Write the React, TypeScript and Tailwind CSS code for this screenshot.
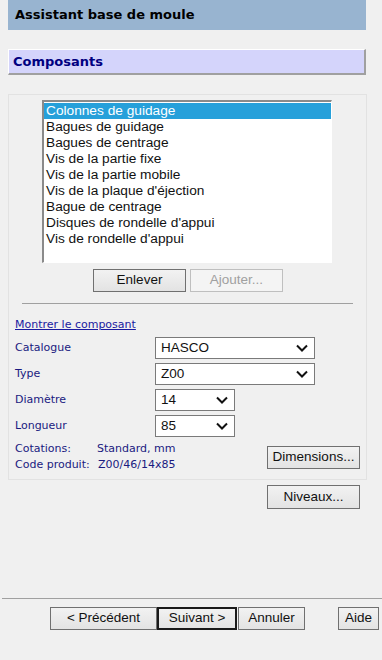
import React from 'react'

const components = [
  'Colonnes de guidage',
  'Bagues de guidage',
  'Bagues de centrage',
  'Vis de la partie fixe',
  'Vis de la partie mobile',
  "Vis de la plaque d'éjection",
  'Bague de centrage',
  "Disques de rondelle d'appui",
  "Vis de rondelle d'appui",
]

const winFont = { fontFamily: '"Liberation Sans", Arial, sans-serif' }
const verdana = { fontFamily: '"DejaVu Sans", Verdana, sans-serif' }

function Chevron() {
  return (
    <svg width="12" height="8" viewBox="0 0 12 8" className="shrink-0">
      <polyline points="1,1.5 6,6.5 11,1.5" fill="none" stroke="#111" strokeWidth="2" />
    </svg>
  )
}

function Select({ value, width }: { value: string; width: string }) {
  return (
    <div
      className={`flex h-[22px] items-center justify-between border border-[#7a7a7a] bg-white pl-[5px] pr-[6px] text-[13.5px] text-[#111] ${width}`}
      style={winFont}
    >
      <span>{value}</span>
      <Chevron />
    </div>
  )
}

function WinButton({
  children,
  className = '',
  disabled = false,
  isDefault = false,
}: {
  children: React.ReactNode
  className?: string
  disabled?: boolean
  isDefault?: boolean
}) {
  const border = disabled
    ? 'border border-[#bfbfbf] text-[#a0a0a0] bg-[#f4f4f4]'
    : isDefault
      ? 'border-2 border-[#1a1a1a] text-[#111] bg-gradient-to-b from-[#f2f2f2] to-[#e3e3e3]'
      : 'border border-[#707070] text-[#111] bg-gradient-to-b from-[#f2f2f2] to-[#e3e3e3]'
  return (
    <button
      className={`flex h-[23px] items-center justify-center text-[13.5px] ${border} ${className}`}
      style={winFont}
    >
      {children}
    </button>
  )
}

function Row({ label, children }: { label: string; children: React.ReactNode }) {
  return (
    <div className="flex h-[22px] items-center">
      <span className="w-[146px] pl-[6px] text-[11px] text-[#1a1a80]">{label}</span>
      {children}
    </div>
  )
}

export default function App() {
  return (
    <div className="relative h-[660px] w-[382px] overflow-hidden bg-[#f0f0f0]" style={verdana}>
      <div className="ml-2 flex h-[30px] w-[358px] items-center bg-[#98b4d0] pl-[7px] text-[13px] font-bold text-black">
        Assistant base de moule
      </div>

      <div className="ml-2 mt-[19px] flex h-[26px] w-[358px] items-center border-l border-t border-b-2 border-r-2 border-l-white border-t-white border-b-[#a0a0a0] border-r-[#a0a0a0] bg-[#d4d4fb] pl-[4px] text-[13px] font-bold text-[#000080]">
        Composants
      </div>

      <div className="ml-2 mt-[19px] h-[386px] w-[359px] border border-[#e2e2e2]">
        <div
          className="ml-[33px] mt-[5px] h-[163px] w-[290px] border-l-2 border-t-2 border-l-[#8a8a8a] border-t-[#8a8a8a] border-r border-b border-r-white border-b-white bg-white pt-px text-[13.7px] text-[#111]"
          style={winFont}
        >
          {components.map((c, i) => (
            <div
              key={c}
              className={`h-[16px] pl-[2px] leading-[16px] ${i === 0 ? 'bg-[#26a0da] text-white' : ''}`}
            >
              {c}
            </div>
          ))}
        </div>

        <div className="ml-[84px] mt-[6px] flex gap-[4px]">
          <WinButton className="w-[93px]">Enlever</WinButton>
          <WinButton className="w-[93px]" disabled>
            Ajouter...
          </WinButton>
        </div>

        <div className="ml-[13px] mt-[11px] h-px w-[331px] bg-[#a0a0a0]" />

        <div className="mt-[14px] pl-[6px] text-[11px] leading-[14px] text-[#1a1aa0] underline">
          Montrer le composant
        </div>

        <div className="mt-[5px] flex flex-col gap-[4px]">
          <Row label="Catalogue">
            <Select value="HASCO" width="w-[160px]" />
          </Row>
          <Row label="Type">
            <Select value="Z00" width="w-[160px]" />
          </Row>
          <Row label="Diamètre">
            <Select value="14" width="w-[80px]" />
          </Row>
          <Row label="Longueur">
            <Select value="85" width="w-[80px]" />
          </Row>
        </div>

        <div className="mt-[4px] flex items-start">
          <div className="pl-[6px] text-[11px] leading-[16px] text-[#1a1a80]">
            <div className="flex">
              <span className="w-[82px]">Cotations:</span>
              <span>Standard, mm</span>
            </div>
            <div className="flex">
              <span className="w-[83px]">Code produit:</span>
              <span>Z00/46/14x85</span>
            </div>
          </div>
          <WinButton className="ml-auto mr-[6px] mt-[5px] w-[93px]">Dimensions...</WinButton>
        </div>
      </div>

      <div className="mt-[5px] flex justify-end pr-[22px]">
        <WinButton className="w-[93px] h-[24px]">Niveaux...</WinButton>
      </div>

      <div className="absolute left-[2px] right-0 top-[598px] h-px bg-[#a0a0a0]" />

      <div className="absolute left-0 top-[607px] flex w-full">
        <WinButton className="ml-[50px] w-[107px]">&lt; Précédent</WinButton>
        <WinButton className="w-[80px]" isDefault>
          Suivant &gt;
        </WinButton>
        <WinButton className="ml-px w-[67px]">Annuler</WinButton>
        <WinButton className="ml-[33px] w-[41px]">Aide</WinButton>
      </div>
    </div>
  )
}
